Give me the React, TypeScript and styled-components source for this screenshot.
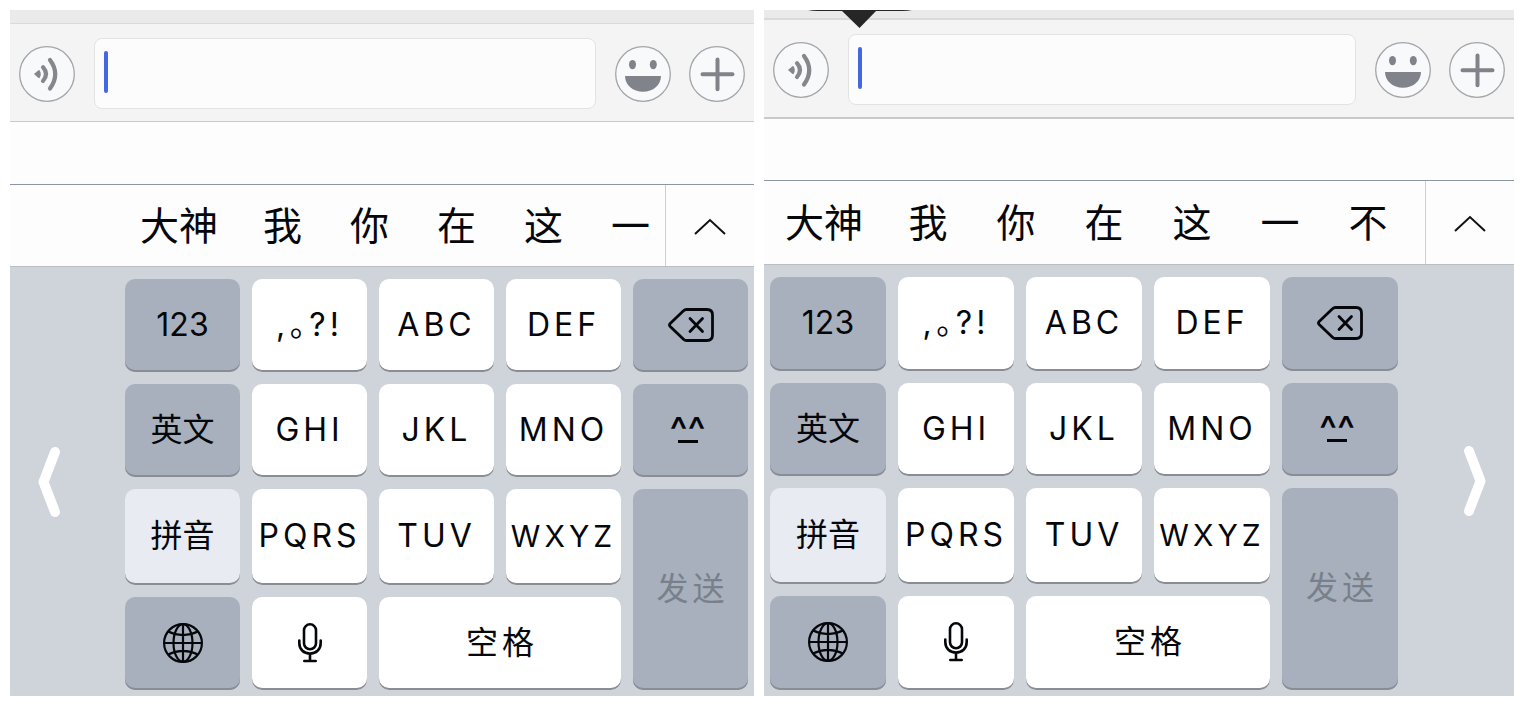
import React from "react";
import styled, { createGlobalStyle } from "styled-components";

const GlobalStyle = createGlobalStyle`
  *, *::before, *::after { box-sizing: border-box; }
  body {
    margin: 0;
    background: #fff;
    color: #05070b;
    font-family: Inter, "Noto Sans CJK SC", sans-serif;
  }
  button, input { font: inherit; color: inherit; }
`;

type Hand = "right" | "left";

const Page = styled.main`
  display: grid;
  grid-template-columns: 744fr 750fr;
  align-items: start;
  gap: 10px;
  padding: 10px;
`;

const Panel = styled.section`
  position: relative;
  min-width: 0;
`;

const ChatEdge = styled.div<{ $hand: Hand }>`
  height: ${(p) => (p.$hand === "right" ? 14 : 10)}px;
  background: #eaeaea;
  border-bottom: ${(p) => (p.$hand === "right" ? 1 : 2)}px solid #dadada;
`;

const Toolbar = styled.div<{ $hand: Hand }>`
  display: flex;
  align-items: center;
  gap: 19px;
  padding: 14px 9px 12px;
  background: #f4f4f5;
  border-bottom: ${(p) => (p.$hand === "right" ? 1 : 2)}px solid #c9c9cb;
`;

const ToolGroup = styled.div`
  display: flex;
  gap: 18px;
`;

const RoundButton = styled.button`
  display: block;
  flex: none;
  width: 56px;
  height: 56px;
  padding: 0;
  border: 0;
  border-radius: 50%;
  background: none;
  svg { display: block; }
`;

const Field = styled.label`
  display: flex;
  flex: 1;
  min-width: 0;
  height: 71px;
  padding: 12px 9px;
  background: #fcfcfc;
  border: 1px solid #e3e3e4;
  border-radius: 8px;
`;

const Caret = styled.span`
  flex: none;
  width: 4px;
  height: 42px;
  border-radius: 2px;
  background: #4468e2;
`;

const MessageInput = styled.input`
  flex: 1;
  min-width: 0;
  height: 42px;
  padding: 0;
  border: 0;
  outline: 0;
  background: none;
  font-size: 32px;
  caret-color: transparent;
`;

const Composition = styled.div<{ $hand: Hand }>`
  height: ${(p) => (p.$hand === "right" ? 63 : 62)}px;
  background: #fdfdfd;
  border-bottom: 1px solid #8c96a3;
`;

const CandidateBar = styled.div<{ $hand: Hand }>`
  display: flex;
  height: ${(p) => (p.$hand === "right" ? 82 : 84)}px;
  padding-left: ${(p) => (p.$hand === "right" ? 109 : 0)}px;
  background: #fdfdfd;
  border-bottom: 1px solid #b9bdc4;
`;

const CandidateList = styled.div`
  display: flex;
  flex: 1;
  min-width: 0;
  overflow: hidden;
`;

const Candidate = styled.button<{ $hand: Hand }>`
  flex: none;
  min-width: ${(p) => (p.$hand === "right" ? 87 : 88)}px;
  padding: 0 21px;
  border: 0;
  background: none;
  font-size: 39px;
  line-height: 56px;
`;

const ExpandButton = styled.button`
  display: flex;
  flex: none;
  align-items: center;
  justify-content: center;
  width: 89px;
  padding: 0;
  border: 0;
  border-left: 1px solid #cdcfd3;
  background: none;
`;

const Keyboard = styled.div<{ $hand: Hand }>`
  display: grid;
  grid-template-columns: ${(p) =>
    p.$hand === "right" ? "103px minmax(0, 1fr)" : "minmax(0, 1fr) 104px"};
  gap: 12px;
  padding: ${(p) => (p.$hand === "right" ? "12px 6px 6px 0" : "12px 0 6px 6px")};
  background: #cfd3da;
`;

const SideSwitch = styled.button<{ $hand: Hand }>`
  display: flex;
  align-items: center;
  justify-content: ${(p) => (p.$hand === "right" ? "flex-start" : "flex-end")};
  padding: 0 28px 6px;
  border: 0;
  background: none;
`;

const KeyGrid = styled.div<{ $hand: Hand }>`
  display: grid;
  grid-template-columns: repeat(5, minmax(0, 1fr));
  grid-template-rows: ${(p) =>
    p.$hand === "right" ? "93px 93px 96px 93px" : "94px 93px 96px 94px"};
  gap: 12px;
`;

type Tone = "light" | "dark" | "active";
type Label = "plain" | "letters" | "small" | "spaced" | "marks";

const toneColor: Record<Tone, string> = {
  light: "#ffffff",
  dark: "#a8b0bd",
  active: "#e8ebf1",
};

const labelStyle: Record<Label, string> = {
  plain: "",
  letters: "letter-spacing: 4px;",
  small: "font-size: 30px; letter-spacing: 4px;",
  spaced: "letter-spacing: 4px; text-indent: 4px;",
  marks: 'letter-spacing: 4px; font-feature-settings: "palt";',
};

const Key = styled.button<{ $tone: Tone; $label: Label; $cols: number; $rows: number }>`
  display: flex;
  align-items: center;
  justify-content: center;
  grid-column: span ${(p) => p.$cols};
  grid-row: span ${(p) => p.$rows};
  min-width: 0;
  padding: 0 0 2px;
  border: 0;
  border-radius: 10px;
  background: ${(p) => toneColor[p.$tone]};
  box-shadow: inset 0 -2px 0 #898d95;
  font-size: 32px;
  line-height: 40px;
  white-space: nowrap;
  ${(p) => labelStyle[p.$label]}
  &:disabled { color: #78808b; }
`;

const Face = styled.span`
  display: flex;
  flex-direction: column;
  align-items: center;
  padding: 4px 6px 0 0;
  font-size: 38px;
  font-weight: 500;
  line-height: 20px;
  &::after {
    content: "";
    width: 20px;
    height: 3px;
    background: currentColor;
  }
`;

const Callout = styled.svg`
  position: absolute;
  top: 0;
  left: 44px;
`;

const VoiceIcon = () => (
  <svg width="56" height="56" viewBox="0 0 56 56" fill="none">
    <circle cx="28" cy="28" r="27.3" fill="#f8f9fb" stroke="#a3a5a9" strokeWidth="1.3" />
    <path d="M16 28L20 24.8Q22 28 20 31.4Z" fill="#85878c" stroke="#85878c" strokeWidth="1.6" strokeLinejoin="round" />
    <path d="M24 21.2Q30 28 24 35M31 14Q41.5 28 31 42.500" stroke="#85878c" strokeWidth="4.2" strokeLinecap="round" />
  </svg>
);

const SmileIcon = () => (
  <svg width="56" height="56" viewBox="0 0 56 56">
    <circle cx="28" cy="28" r="27.3" fill="#f8f9fb" stroke="#a3a5a9" strokeWidth="1.3" />
    <ellipse cx="17.500" cy="18.600" rx="3.500" ry="4.700" fill="#808389" />
    <ellipse cx="38.300" cy="18.600" rx="3.500" ry="4.700" fill="#808389" />
    <path d="M10 30H46C46 39 38 45.800 28 45.800S10 39 10 30Z" fill="#808389" />
  </svg>
);

const PlusIcon = () => (
  <svg width="56" height="56" viewBox="0 0 56 56">
    <circle cx="28" cy="28" r="27.3" fill="#f8f9fb" stroke="#a3a5a9" strokeWidth="1.3" />
    <path d="M13.500 28.300H43.500M28.500 13.500V43.300" stroke="#808389" strokeWidth="4" strokeLinecap="round" />
  </svg>
);

const ExpandIcon = () => (
  <svg width="32" height="18" viewBox="0 0 32 18" fill="none" stroke="#111" strokeWidth="2">
    <path d="M1 17L16 3L31 17" />
  </svg>
);

const ChevronIcon = ({ flip }: { flip: boolean }) => (
  <svg width="22" height="70" viewBox="0 0 22 70" fill="none" stroke="#fff" strokeWidth="10" strokeLinecap="round" strokeLinejoin="round">
    <path d={flip ? "M5 5L16.500 35L5 65" : "M17 5L5.500 35L17 65"} />
  </svg>
);

const DeleteIcon = () => (
  <svg width="46" height="34" viewBox="0 0 46 34" fill="none" stroke="currentColor" strokeWidth="2.8" strokeLinecap="round" strokeLinejoin="round">
    <path d="M18.500 1.500H39Q44.500 1.500 44.500 7V27Q44.500 32.500 39 32.500H18.500Q16.800 32.500 15.500 31.200L2.200 18.500Q.8 17 2.200 15.500L15.500 2.800Q16.800 1.500 18.500 1.500Z" />
    <path d="M22 10.500L34.500 23.500M34.500 10.500L22 23.500" />
  </svg>
);

const GlobeIcon = () => (
  <svg width="40" height="40" viewBox="0 0 40 40" fill="none" stroke="currentColor" strokeWidth="2.2">
    <circle cx="20" cy="20" r="18.900" />
    <ellipse cx="20" cy="20" rx="9.500" ry="18.900" />
    <path d="M20 1V39M1 20H39M4.500 8.300Q20 15.800 35.500 8.300M4.500 31.700Q20 24.200 35.500 31.700" />
  </svg>
);

const MicIcon = () => (
  <svg width="24" height="40" viewBox="0 0 24 40" fill="none" stroke="currentColor" strokeWidth="2.600" strokeLinecap="round">
    <rect x="6" y="1.300" width="12" height="25" rx="6" />
    <path d="M1.300 17.500V20C1.300 26.500 6 30.500 12 30.500S22.700 26.500 22.700 20V17.500M12 30.500V37.500M6.300 38H17.700" />
  </svg>
);

interface KeySpec {
  id: string;
  content: React.ReactNode;
  aria?: string;
  tone?: Tone;
  label?: Label;
  cols?: number;
  rows?: number;
  disabled?: boolean;
}

const keys: KeySpec[] = [
  { id: "123", content: "123", tone: "dark" },
  { id: "marks", content: ",。?!", label: "marks" },
  { id: "abc", content: "ABC", label: "letters" },
  { id: "def", content: "DEF", label: "letters" },
  { id: "delete", content: <DeleteIcon />, aria: "删除", tone: "dark" },
  { id: "english", content: "英文", tone: "dark" },
  { id: "ghi", content: "GHI", label: "letters" },
  { id: "jkl", content: "JKL", label: "letters" },
  { id: "mno", content: "MNO", label: "letters" },
  { id: "face", content: <Face>^^</Face>, aria: "颜文字", tone: "dark" },
  { id: "pinyin", content: "拼音", tone: "active" },
  { id: "pqrs", content: "PQRS", label: "letters" },
  { id: "tuv", content: "TUV", label: "letters" },
  { id: "wxyz", content: "WXYZ", label: "small" },
  { id: "send", content: "发送", tone: "dark", label: "spaced", rows: 2, disabled: true },
  { id: "globe", content: <GlobeIcon />, aria: "切换键盘", tone: "dark" },
  { id: "mic", content: <MicIcon />, aria: "听写" },
  { id: "space", content: "空格", label: "spaced", cols: 2 },
];

const OneHandedKeyboard = ({ hand, words }: { hand: Hand; words: string[] }) => {
  const side = (
    <SideSwitch type="button" $hand={hand} aria-label="恢复全宽键盘">
      <ChevronIcon flip={hand === "left"} />
    </SideSwitch>
  );
  return (
    <Panel>
      <ChatEdge $hand={hand} />
      <Toolbar $hand={hand}>
        <RoundButton type="button" aria-label="语音"><VoiceIcon /></RoundButton>
        <Field>
          <Caret />
          <MessageInput type="text" aria-label="消息" />
        </Field>
        <ToolGroup>
          <RoundButton type="button" aria-label="表情"><SmileIcon /></RoundButton>
          <RoundButton type="button" aria-label="更多"><PlusIcon /></RoundButton>
        </ToolGroup>
      </Toolbar>
      <Composition $hand={hand} />
      <CandidateBar $hand={hand}>
        <CandidateList>
          {words.map((word) => (
            <Candidate key={word} type="button" $hand={hand}>{word}</Candidate>
          ))}
        </CandidateList>
        <ExpandButton type="button" aria-label="展开候选"><ExpandIcon /></ExpandButton>
      </CandidateBar>
      <Keyboard $hand={hand}>
        {hand === "right" && side}
        <KeyGrid $hand={hand}>
          {keys.map((k) => (
            <Key
              key={k.id}
              type="button"
              aria-label={k.aria}
              disabled={k.disabled}
              $tone={k.tone ?? "light"}
              $label={k.label ?? "plain"}
              $cols={k.cols ?? 1}
              $rows={k.rows ?? 1}
            >
              {k.content}
            </Key>
          ))}
        </KeyGrid>
        {hand === "left" && side}
      </Keyboard>
      {hand === "left" && (
        <Callout width="104" height="18" viewBox="0 0 104 18" fill="#262626">
          <path d="M0 0H104Q100 1 94 1H10Q4 1 0 0Z" />
          <path d="M33 0H69L51.500 18Z" />
        </Callout>
      )}
    </Panel>
  );
};

export default function App() {
  return (
    <>
      <GlobalStyle />
      <Page>
        <OneHandedKeyboard hand="right" words={["大神", "我", "你", "在", "这", "一"]} />
        <OneHandedKeyboard hand="left" words={["大神", "我", "你", "在", "这", "一", "不"]} />
      </Page>
    </>
  );
}
